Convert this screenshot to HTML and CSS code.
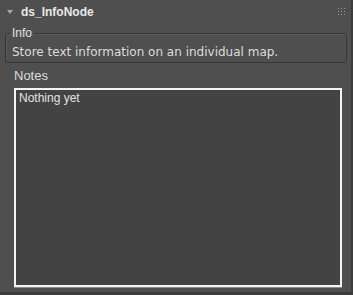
FILE: index.html
```html
<!DOCTYPE html>
<html>
<head>
<meta charset="utf-8">
<link rel="stylesheet" href="styles.css">
</head>
<body>
<div class="panel">
  <div class="header">
    <span class="arrow"></span>
    <span class="title">ds_InfoNode</span>
    <svg class="grip" width="7" height="7" viewBox="0 0 7 7">
      <g fill="#9a9a9a">
        <rect x="0" y="0" width="1" height="1"/><rect x="3" y="0" width="1" height="1"/><rect x="6" y="0" width="1" height="1"/>
        <rect x="0" y="3" width="1" height="1"/><rect x="3" y="3" width="1" height="1"/><rect x="6" y="3" width="1" height="1"/>
        <rect x="0" y="6" width="1" height="1"/><rect x="3" y="6" width="1" height="1"/><rect x="6" y="6" width="1" height="1"/>
      </g>
    </svg>
  </div>
  <fieldset class="group">
    <legend>Info</legend>
    <p class="desc">Store text information on an individual map.</p>
  </fieldset>
  <div class="notes-label">Notes</div>
  <div class="notes">Nothing yet</div>
</div>
</body>
</html>
```
FILE: styles.css
```css
html, body {
  margin: 0;
  padding: 0;
  background: #3c3c3c;
}
body {
  width: 353px;
  height: 295px;
  overflow: hidden;
}
.panel {
  box-sizing: border-box;
  width: 351px;
  height: 292px;
  background: #4f4f4f;
  font-family: "Liberation Sans", Arial, sans-serif;
  font-size: 12px;
  line-height: 14px;
  color: #dcdcdc;
  display: flex;
  flex-direction: column;
}
.header {
  height: 26px;
  display: flex;
  align-items: flex-start;
  padding-top: 5px;
  box-sizing: border-box;
}
.arrow {
  width: 0;
  height: 0;
  margin: 5px 0 0 7px;
  border-left: 3px solid transparent;
  border-right: 3px solid transparent;
  border-top: 4px solid #a8a8a8;
}
.title {
  margin-left: 8px;
  font-weight: bold;
  color: #e8e8e8;
}
.grip {
  margin: 3px 0 0 auto;
  margin-right: 6px;
}
.group {
  margin: 0 0 0 5px;
  width: 342px;
  box-sizing: border-box;
  border: 1px solid #353535;
  border-radius: 3px;
  box-shadow: inset 1px 1px 0 #5a5a5a;
  padding: 0 4px 3px;
}
.group legend {
  padding: 0 2px;
  color: #e0e0e0;
}
.desc {
  margin: 5px 0 0 2px;
  font-family: "DejaVu Sans", sans-serif;
  font-size: 12px;
}
.notes-label {
  margin: 6px 0 0 14px;
  height: 19px;
  font-size: 13px;
}
.notes {
  margin-left: 14px;
  width: 328px;
  height: 199px;
  box-sizing: border-box;
  border: 2px solid #f4f4f4;
  background: #434343;
  padding: 1px 3px;
  box-shadow: 0 1px 0 #8a8a8a;
  color: #e4e4e4;
}
```
